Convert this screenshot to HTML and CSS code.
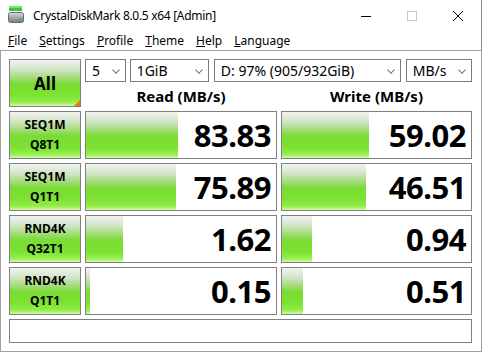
FILE: index.html
```html
<!DOCTYPE html>
<html lang="en">
<head>
    <meta charset="UTF-8">
    <title>CrystalDiskMark 8.0.5 x64 [Admin]</title>
    <link rel="stylesheet" href="styles.css">
</head>
<body>
    <div class="window">
        <div class="titlebar">
            <svg class="app-icon" width="16" height="18" viewBox="0 0 16 18">
                <defs>
                    <linearGradient id="body" x1="0" y1="0" x2="0" y2="1">
                        <stop offset="0" stop-color="#d8d8d8"/>
                        <stop offset="1" stop-color="#7a7a7a"/>
                    </linearGradient>
                </defs>
                <rect x="1" y="0" width="13" height="5" fill="#3cc43c"/>
                <rect x="1" y="0" width="13" height="2" fill="#6ee86e"/>
                <rect x="0.5" y="6.5" width="15" height="10" rx="2" fill="url(#body)" stroke="#6a6a6a"/>
                <rect x="11" y="12" width="3" height="2" fill="#3cc43c"/>
            </svg>
            <span class="title">CrystalDiskMark 8.0.5 x64 [Admin]</span>
            <div class="controls">
                <span class="ctl">
                    <svg width="10" height="10" viewBox="0 0 10 10"><path d="M0 5.5h10" stroke="#000"/></svg>
                </span>
                <span class="ctl">
                    <svg width="10" height="10" viewBox="0 0 10 10"><rect x="0.5" y="0.5" width="9" height="9" fill="none" stroke="#c8c8c8"/></svg>
                </span>
                <span class="ctl">
                    <svg width="10" height="10" viewBox="0 0 10 10"><path d="M0 0L10 10M10 0L0 10" stroke="#000"/></svg>
                </span>
            </div>
        </div>

        <div class="menubar">
            <span><u>F</u>ile</span>
            <span><u>S</u>ettings</span>
            <span><u>P</u>rofile</span>
            <span><u>T</u>heme</span>
            <span><u>H</u>elp</span>
            <span><u>L</u>anguage</span>
        </div>

        <div class="client">
            <div class="grid">
                <div class="btn all">All<span class="corner"></span></div>

                <div class="combos">
                    <div class="combo c-count">5<i class="arrow"></i></div>
                    <div class="combo c-size">1GiB<i class="arrow"></i></div>
                    <div class="combo c-drive">D: 97% (905/932GiB)<i class="arrow"></i></div>
                    <div class="combo c-unit">MB/s<i class="arrow"></i></div>
                </div>

                <div class="head">Read (MB/s)</div>
                <div class="head">Write (MB/s)</div>

                <div class="btn label">SEQ1M<br>Q8T1</div>
                <div class="meter"><div class="fill" style="width: 92px"></div><span>83.83</span></div>
                <div class="meter"><div class="fill" style="width: 87px"></div><span>59.02</span></div>

                <div class="btn label">SEQ1M<br>Q1T1</div>
                <div class="meter"><div class="fill" style="width: 90px"></div><span>75.89</span></div>
                <div class="meter"><div class="fill" style="width: 84px"></div><span>46.51</span></div>

                <div class="btn label">RND4K<br>Q32T1</div>
                <div class="meter"><div class="fill" style="width: 37px"></div><span>1.62</span></div>
                <div class="meter"><div class="fill" style="width: 30px"></div><span>0.94</span></div>

                <div class="btn label">RND4K<br>Q1T1</div>
                <div class="meter"><div class="fill" style="width: 4px"></div><span>0.15</span></div>
                <div class="meter"><div class="fill" style="width: 21px"></div><span>0.51</span></div>

                <div class="status"></div>
            </div>
        </div>
    </div>
</body>
</html>
```

FILE: styles.css
```css
* {
    margin: 0;
    padding: 0;
    box-sizing: border-box;
}

body {
    font-family: "Noto Sans", "Open Sans", sans-serif;
    background-color: #ffffff;
    color: #000;
    width: 482px;
    height: 352px;
    overflow: hidden;
}

.window {
    width: 482px;
    height: 352px;
    display: flex;
    flex-direction: column;
}

.titlebar {
    height: 31px;
    display: flex;
    align-items: center;
    padding-left: 8px;
    border-right: 1px solid #8a8a8a;
}

.app-icon {
    margin-top: -2px;
}

.title {
    font-size: 12px;
    margin-left: 9px;
    letter-spacing: -0.3px;
}

.controls {
    margin-left: auto;
    display: flex;
    height: 31px;
}

.ctl {
    width: 46px;
    display: flex;
    align-items: center;
    justify-content: center;
}

.menubar {
    height: 19px;
    display: flex;
    align-items: center;
    font-size: 12px;
    padding-left: 8px;
    gap: 12px;
    border-right: 1px solid #8a8a8a;
}

.menubar u {
    text-decoration-thickness: 1px;
    text-underline-offset: 1px;
}

.client {
    flex: 1;
    border: 1px solid #a0a0a0;
    padding: 8px 0 0 8px;
}

/* rows 3-7 carry a 4px top margin for the spacing between cells */
.grid {
    display: grid;
    grid-template-columns: 72px 192px 191px;
    grid-template-rows: 24px 24px 52px 52px 52px 52px 28px;
    column-gap: 4px;
}

.btn {
    border: 1px solid #808080;
    background: linear-gradient(to bottom, #f2f2f2 0%, #cfe4c2 22%, #9ada6a 42%, #78dc32 52%, #7ee234 78%, #96ee4a 92%, #d6fab2 100%);
    display: flex;
    align-items: center;
    justify-content: center;
    text-align: center;
    font-weight: bold;
}

.all {
    grid-row: 1 / 3;
    font-size: 17px;
    position: relative;
}

.corner {
    position: absolute;
    right: 0;
    bottom: 0;
    width: 0;
    height: 0;
    border-left: 6px solid transparent;
    border-bottom: 6px solid #f07810;
}

.label {
    font-size: 12px;
    line-height: 20px;
    height: 48px;
    margin-top: 4px;
}

.combos {
    grid-column: 2 / 4;
    display: flex;
    gap: 4px;
    height: 24px;
}

.combo {
    border: 1px solid #7a7a7a;
    height: 23px;
    font-size: 14px;
    display: flex;
    align-items: center;
    padding-left: 6px;
    position: relative;
    white-space: nowrap;
}

.c-count { width: 41px; }
.c-size { width: 80px; }
.c-drive { width: 189px; margin-left: 1px; }
.c-unit { width: 67px; margin-left: 1px; }

.arrow {
    position: absolute;
    right: 6px;
    top: 7px;
    width: 6px;
    height: 6px;
    border-right: 1px solid #666;
    border-bottom: 1px solid #666;
    transform: rotate(45deg) scale(0.9);
}

.head {
    font-size: 15px;
    font-weight: bold;
    text-align: center;
    line-height: 24px;
    padding-top: 1px;
}

.meter {
    border: 1px solid #808080;
    height: 48px;
    margin-top: 4px;
    position: relative;
    display: flex;
    align-items: center;
    justify-content: flex-end;
    padding-right: 5px;
}

.fill {
    position: absolute;
    left: 0;
    top: 0;
    bottom: 0;
    background: linear-gradient(to bottom, #f2f2f2 0%, #cfe4c2 22%, #9ada6a 42%, #78dc32 52%, #7ee234 78%, #96ee4a 92%, #d6fab2 100%);
}

.meter span {
    position: relative;
    font-size: 31px;
    font-weight: bold;
    letter-spacing: -0.5px;
}

.status {
    grid-column: 1 / 4;
    margin-top: 4px;
    border: 1px solid #808080;
    height: 24px;
}
```
